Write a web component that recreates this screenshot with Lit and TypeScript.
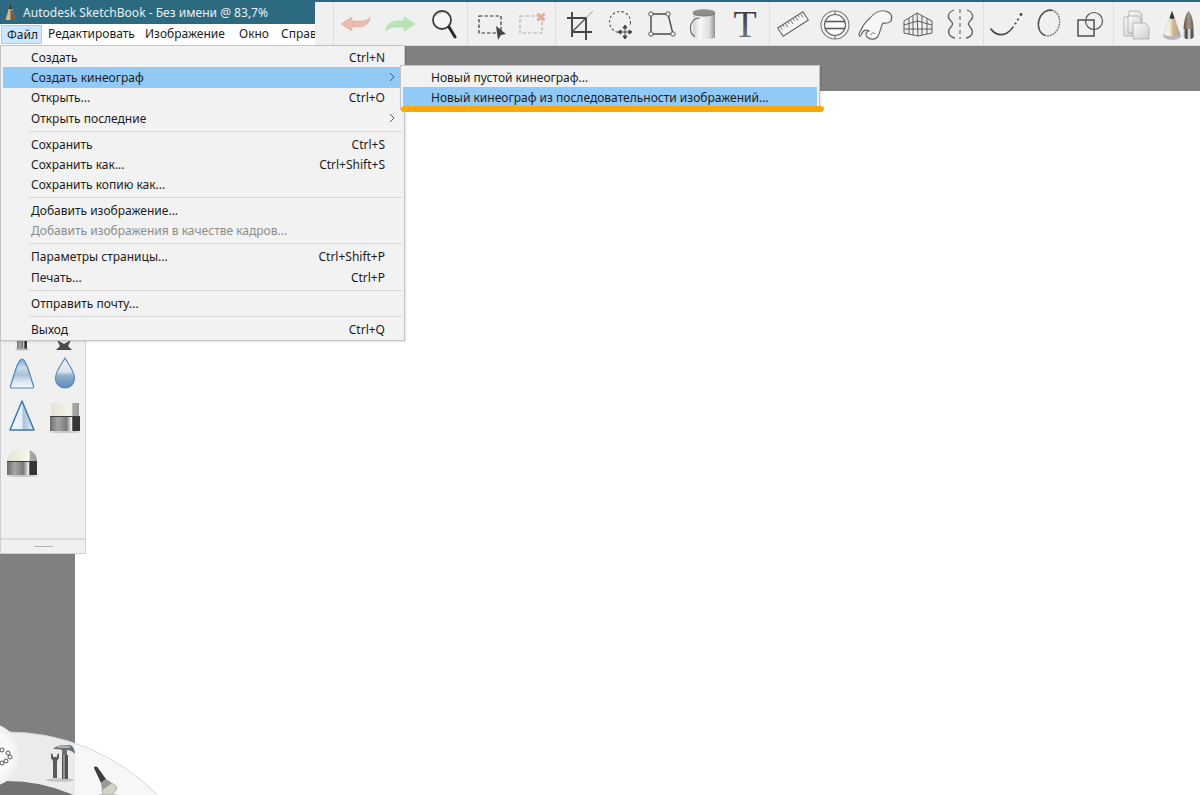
import { LitElement, html, css, svg } from "lit";
import { customElement } from "lit/decorators.js";

const defs = svg`
  <linearGradient id="metal" x1="0" x2="1" y1="0" y2="0">
    <stop offset="0" stop-color="#6b6b6b"/><stop offset=".25" stop-color="#a6a6a6"/><stop offset=".55" stop-color="#7b7b7b"/>
    <stop offset=".72" stop-color="#f2f2f2"/><stop offset=".76" stop-color="#33363a"/><stop offset="1" stop-color="#33363a"/>
  </linearGradient>
  <linearGradient id="cream" x1="0" x2="1" y1="0" y2="0">
    <stop offset="0" stop-color="#e6e2d6"/><stop offset=".7" stop-color="#f7f4ea"/><stop offset=".72" stop-color="#fff"/><stop offset=".78" stop-color="#aaa"/><stop offset="1" stop-color="#999"/>
  </linearGradient>
  <linearGradient id="blueV" x1="0" x2="0" y1="0" y2="1">
    <stop offset="0" stop-color="#7fa5cc"/><stop offset=".3" stop-color="#cbdbe9"/><stop offset=".55" stop-color="#a9c1d9"/><stop offset=".8" stop-color="#dfe9f2"/><stop offset="1" stop-color="#f4f7fa"/>
  </linearGradient>
  <linearGradient id="drop" x1="0" x2="0" y1="0" y2="1">
    <stop offset="0" stop-color="#f2f5f8"/><stop offset=".45" stop-color="#dbe4ec"/><stop offset=".6" stop-color="#8fadcc"/><stop offset="1" stop-color="#5f8ab8"/>
  </linearGradient>
  <linearGradient id="blueH" x1="0" x2="1" y1="0" y2="0">
    <stop offset="0" stop-color="#f4f8fb"/><stop offset=".5" stop-color="#e5eef6"/><stop offset=".55" stop-color="#a6c4de"/><stop offset="1" stop-color="#e3edf5"/>
  </linearGradient>
  <linearGradient id="can" x1="0" x2="1" y1="0" y2="0">
    <stop offset="0" stop-color="#cfcfcf"/><stop offset=".3" stop-color="#fafafa"/><stop offset=".75" stop-color="#dcdcdc"/><stop offset="1" stop-color="#8f8f8f"/>
  </linearGradient>
  <linearGradient id="tee" x1="0" x2="0" y1="0" y2="1">
    <stop offset="0" stop-color="#2f2f2f"/><stop offset=".55" stop-color="#555"/><stop offset="1" stop-color="#8a8a8a"/>
  </linearGradient>
  <linearGradient id="page" x1="0" x2="1" y1="0" y2="1">
    <stop offset="0" stop-color="#fbfbfb"/><stop offset="1" stop-color="#cdcdcd"/>
  </linearGradient>
  <linearGradient id="wood" x1="0" x2="1" y1="0" y2="0">
    <stop offset="0" stop-color="#f7f7f5"/><stop offset=".4" stop-color="#eee9df"/><stop offset=".55" stop-color="#d5b48d"/><stop offset="1" stop-color="#a9a49b"/>
  </linearGradient>
  <linearGradient id="brown" x1="0" x2="1" y1="0" y2="0">
    <stop offset="0" stop-color="#5e5043"/><stop offset=".5" stop-color="#a39686"/><stop offset="1" stop-color="#6d5f50"/>
  </linearGradient>
  <linearGradient id="steel" x1="0" x2="1" y1="0" y2="0">
    <stop offset="0" stop-color="#e8e8e8"/><stop offset=".5" stop-color="#bcbcbc"/><stop offset="1" stop-color="#8c8c8c"/>
  </linearGradient>
  <linearGradient id="ferrule" x1="0" x2="1" y1="0" y2="0">
    <stop offset="0" stop-color="#f4f4f4"/><stop offset=".3" stop-color="#333"/><stop offset=".55" stop-color="#f4f4f4"/><stop offset=".8" stop-color="#444"/><stop offset="1" stop-color="#888"/>
  </linearGradient>
  <radialGradient id="disc">
    <stop offset="0" stop-color="#ffffff"/><stop offset=".75" stop-color="#f8f8f8"/><stop offset="1" stop-color="#ededed"/>
  </radialGradient>
  <linearGradient id="hole" x1="0" x2="0" y1="0" y2="1">
    <stop offset="0" stop-color="#727272"/><stop offset="1" stop-color="#808080"/>
  </linearGradient>
`;

const tb = (body: unknown) => html`<div class="btn"><svg viewBox="0 0 40 40" width="40" height="40">${body}</svg></div>`;

const toolGroups = [
  [
    tb(svg`<path d="M5 20 16 13V17H24C29 17 32 16 34 13 34 20 28 23 22 23H16V27Z" fill="#eabcae" stroke="#e0aa9a" stroke-width=".6"/>`),
    tb(svg`<path d="M5 20 16 13V17H24C29 17 32 16 34 13 34 20 28 23 22 23H16V27Z" transform="rotate(180 20 20)" fill="#b9e6b4" stroke="#a5d8a0" stroke-width=".6"/>`),
    tb(svg`<circle cx="17" cy="16" r="9" fill="#f6f6f6" stroke="#3c3c3c" stroke-width="1.8"/><path d="M11 12a8 8 0 0 1 6-3" fill="none" stroke="#c7c7c7"/><path d="M24 23 30 33" stroke="#2a2a2a" stroke-width="3" stroke-linecap="round"/>`),
  ],
  [
    tb(svg`<rect x="9" y="12" width="22" height="17" fill="none" stroke="#333" stroke-width="1.2" stroke-dasharray="3.5 2"/><path d="M26 22 36 30 31 31 28 36Z" fill="#444"/>`),
    tb(svg`<rect x="7" y="12" width="22" height="17" fill="none" stroke="#b0b0b0" stroke-width="1.2" stroke-dasharray="3.5 2"/><path d="M25.5 9 28 11.5 30.5 9 32 10.5 29.5 13 32 15.5 30.5 17 28 14.5 25.5 17 24 15.5 26.5 13 24 10.5Z" fill="#e4a99b" stroke="#e4a99b"/>`),
  ],
  [
    tb(svg`<path d="M15 8V33M10 14H30M29 14V36M15 28H35" fill="none" stroke="#444" stroke-width="1.9"/><path d="M15 28 29 14" stroke="#555" stroke-width="1.4"/><path d="M29 14 36 7" stroke="#888" stroke-width=".8"/>`),
    tb(svg`<circle cx="20" cy="18" r="10.5" fill="none" stroke="#555" stroke-width="1.1" stroke-dasharray="2.6 2"/><rect x="18" y="21" width="14" height="13" fill="#f0f0f0"/><path d="M25 22V34M19 28H31M25 21 23 24H27ZM25 35 23 32H27ZM18 28 21 26V30ZM32 28 29 26V30Z" fill="#444" stroke="#444" stroke-width="1"/>`),
    tb(svg`<path d="M9 10H26L31 30H9Z" fill="none" stroke="#4a4a4a" stroke-width="1.4"/><g fill="#f5f5f5" stroke="#555" stroke-width="1"><circle cx="9" cy="10" r="2.2"/><circle cx="26" cy="10" r="2.2"/><circle cx="31" cy="30" r="2.2"/><circle cx="9" cy="30" r="2.2"/></g>`),
    tb(svg`<path d="M8 9V33C8 36 30 36 30 33V9Z" fill="url(#can)"/><ellipse cx="19" cy="9" rx="11" ry="3" fill="#8d8d8d" stroke="#777"/><path d="M8 8C10 5 28 5 30 8" fill="none" stroke="#aaa"/><path d="M15 14C8 14 4 20 6 28 7 31 8 32 10 32" fill="none" stroke="#666" stroke-width="1.2"/>`),
    html`<div class="btn"><svg viewBox="0 0 40 40" width="40" height="40"><text x="17" y="33" text-anchor="middle" class="tee" fill="url(#tee)">T</text></svg></div>`,
  ],
  [
    tb(svg`<g transform="rotate(-33 22 20)"><rect x="7" y="15" width="30" height="10" fill="#f6f6f6" stroke="#666" stroke-width="1.1"/><path d="M10 15V19M13 15V18M16 15V20M19 15V18M22 15V20M25 15V18M28 15V20M31 15V18M34 15V20" stroke="#777" stroke-width=".9"/></g>`),
    tb(svg`<circle cx="21" cy="21" r="14" fill="#f4f4f4" stroke="#7a7a7a" stroke-width="1.1"/><circle cx="21" cy="21" r="10.5" fill="#fafafa" stroke="#666" stroke-width="1.2"/><path d="M11 17.500H31M11 24.500H31" stroke="#555" stroke-width="1.3"/><path d="M21 7V10M21 32V35" stroke="#777" stroke-width="1.2"/>`),
    tb(svg`<path d="M3 30C6 23 10 17 14 14 18 9 24 6 29 7 35 8 37 12 35 17 33 20 30 19 27 19 25 21 25 27 22 32 20 36 14 36 11 33 9 30 10 28 13 27 10 25 7 26 5 31 4 33 3 32 3 30Z" fill="#f6f6f6" stroke="#666" stroke-width="1.2"/><path d="M15 31C15 29 18 28 19 30" fill="none" stroke="#777"/>`),
    tb(svg`<g fill="none" stroke="#5c5c5c" stroke-width="1"><path d="M5 17 18 9 33 17V29L19 32 5 29ZM18 9 19 32M10 14V30.200M14 11.500V31M23 11.500V31M28 14.500V30M5 21 18.500 17 33 21M5 25 19 25 33 25"/></g>`),
    tb(svg`<path d="M18 5V35" stroke="#777" stroke-width="1.3" stroke-dasharray="4 3"/><path d="M12 6C6 8 5 13 8 16 11 19 12 20 8 24 5 28 7 33 13 34M25 6C31 8 32 13 29 16 26 19 25 20 29 24 32 28 30 33 24 34" fill="none" stroke="#666" stroke-width="1.3"/>`),
  ],
  [
    tb(svg`<path d="M5 25C9 31 16 32 21 29 24 27 26 25 27 23" fill="none" stroke="#444" stroke-width="1.6" stroke-linecap="round"/><circle cx="29.5" cy="19.5" r="1.1" fill="#444"/><circle cx="32" cy="15.5" r="1.1" fill="#444"/><circle cx="35" cy="10.5" r="1.4" fill="#444"/>`),
    tb(svg`<g transform="rotate(15 20 19)"><ellipse cx="20" cy="19" rx="10.5" ry="13" fill="none" stroke="#c0c0c0" stroke-width="1.2"/><path d="M20 6A10.5 13 0 0 0 20 32" fill="none" stroke="#555" stroke-width="1.5"/><path d="M20 6A10.5 13 0 0 1 20 32" fill="none" stroke="#777" stroke-width="1.4" stroke-dasharray="1.4 1.4"/></g>`),
    tb(svg`<rect x="6" y="16" width="16" height="16" fill="none" stroke="#444" stroke-width="1.4"/><circle cx="22" cy="17" r="8.5" fill="none" stroke="#555" stroke-width="1.2"/>`),
  ],
  [
    tb(svg`<g stroke="#a8a8a8" stroke-width=".8" fill="url(#page)"><path d="M13 7H23L26 10V24H13Z"/><path d="M8 13H17L20 16V32H8Z"/><path d="M12 12H22L25 15V29H12Z"/><path d="M17 19H29L33 23V35H17Z"/></g>`),
    tb(svg`<path d="M4 32 13 7 22 32C19 37 7 37 4 32Z" fill="url(#wood)" stroke="#c4c4c4" stroke-width=".5"/><path d="M10.500 14 13 7 15.500 14C14 15.300 12 15.300 10.500 14Z" fill="#37332f"/><path d="M4 32C7 37 19 37 22 32L21.400 30C18 33 8 33 4.600 30Z" fill="#b9b9b9"/><path d="M24.500 25C25 16 27 9 29.500 7 32 9 34.500 16 34.500 25Z" fill="url(#brown)"/><path d="M24.500 25H34.500L35 33C32 36 27 36 24 33Z" fill="url(#ferrule)"/>`),
  ],
];

type Row = { t?: string; k?: string; sub?: boolean; on?: boolean; off?: boolean; sep?: boolean };
const fileMenu: Row[] = [
  { t: "Создать", k: "Ctrl+N" },
  { t: "Создать кинеограф", sub: true, on: true },
  { t: "Открыть...", k: "Ctrl+O" },
  { t: "Открыть последние", sub: true },
  { sep: true },
  { t: "Сохранить", k: "Ctrl+S" },
  { t: "Сохранить как...", k: "Ctrl+Shift+S" },
  { t: "Сохранить копию как..." },
  { sep: true },
  { t: "Добавить изображение..." },
  { t: "Добавить изображения в качестве кадров...", off: true },
  { sep: true },
  { t: "Параметры страницы...", k: "Ctrl+Shift+P" },
  { t: "Печать...", k: "Ctrl+P" },
  { sep: true },
  { t: "Отправить почту..." },
  { sep: true },
  { t: "Выход", k: "Ctrl+Q" },
];
const subMenu: Row[] = [
  { t: "Новый пустой кинеограф..." },
  { t: "Новый кинеограф из последовательности изображений...", on: true },
];

const chevron = html`<svg class="chev" viewBox="0 0 6 10" width="6" height="10"><path d="M1 1 5 5 1 9" fill="none" stroke="#555" stroke-width="1"/></svg>`;

const renderRow = (r: Row) =>
  r.sep
    ? html`<div class="sep"></div>`
    : html`<div class="row ${r.on ? "on" : ""} ${r.off ? "off" : ""}">
        <span>${r.t}</span>
        ${r.k ? html`<span class="key">${r.k}</span>` : ""}${r.sub ? chevron : ""}
      </div>`;

const panelIcons = [
  svg`<rect x="16" y="31" width="10" height="9" fill="url(#metal)"/><ellipse cx="21" cy="40.500" rx="7" ry="1" fill="#bdbdbd"/>`,
  svg`<path d="M13 31 20 35 27 31 24 37 28 41H12L16 37Z" fill="#4a4a4a"/>`,
  svg`<path d="M9.500 33C13 22 17 6 21 6 25 6 29 22 32.500 33 33 34.500 32 35 31 35H11C10 35 9 34.500 9.500 33Z" fill="url(#blueV)" stroke="#4f85bb" stroke-width="1.2"/>`,
  svg`<path d="M21 5C18 11 11.500 18 11.500 25 11.500 31 16 35 21 35 26 35 30.500 31 30.500 25 30.500 18 24 11 21 5Z" fill="url(#drop)" stroke="#5f8cbc" stroke-width="1.2"/>`,
  svg`<path d="M21 4 9 33H33Z" fill="url(#blueH)" stroke="#3b78b4" stroke-width="1.5" stroke-linejoin="round"/>`,
  svg`<rect x="6" y="19" width="30" height="15" fill="url(#metal)"/><rect x="6" y="19" width="30" height="1" fill="#3d3d3d"/><rect x="7" y="6" width="28" height="13" fill="url(#cream)"/><ellipse cx="21" cy="35" rx="15" ry="1" fill="#c8c8c8"/>`,
  svg`<path d="M6 20C6 12 12 8 21 8 30 8 36 12 36 20Z" fill="url(#cream)"/><rect x="6" y="20" width="30" height="14" fill="url(#metal)"/><rect x="6" y="20" width="30" height="1" fill="#3d3d3d"/><ellipse cx="21" cy="35" rx="15" ry="1" fill="#c8c8c8"/>`,
];

@customElement("app-root")
export class AppRoot extends LitElement {
  static styles = css`
    :host {
      display: flex;
      flex-direction: column;
      width: 1200px;
      height: 795px;
      position: relative;
      overflow: hidden;
      background: #808080;
      font-family: "Noto Sans", "Open Sans", sans-serif;
      font-size: 12px;
      color: #1c1c1c;
    }
    .defs { position: absolute; width: 0; height: 0; }
    .top { display: flex; height: 46px; flex: none; }
    .left { width: 315px; flex: none; overflow: hidden; }
    .title {
      height: 24px;
      background: #2b6a80;
      color: #e8f0f3;
      display: flex;
      align-items: center;
      gap: 7px;
      padding-left: 5px;
      font-size: 12.05px;
      white-space: nowrap;
    }
    .menubar {
      height: 22px;
      background: #fff;
      display: flex;
      align-items: flex-start;
      white-space: nowrap;
      padding: 1px 0 0 1px;
    }
    .mi { height: 19px; line-height: 18px; padding-left: 6px; box-sizing: border-box; flex: none; }
    .mi.active { background: #cce8ff; border: 1px solid #99d1ff; line-height: 17px; padding-left: 5px; width: 41px; }
    .m1 { width: 97px; } .m2 { width: 94px; } .m3 { width: 42px; }
    .toolbar {
      flex: 1;
      display: flex;
      background: #f0f0f0;
      border-top: 2px solid #2b6a80;
      border-bottom: 1px solid #dcdcdc;
      padding-left: 18px;
      box-sizing: border-box;
    }
    .group { display: flex; border-left: 1px solid #dedede; box-sizing: border-box; }
    .g0 { width: 134px; } .g1 { width: 88px; } .g2 { width: 214px; }
    .g3 { width: 214px; } .g4 { width: 130px; } .g5 { flex: 1; }
    .btn { flex: 1 1 0; display: flex; align-items: center; justify-content: center; min-width: 0; }
    .tee { font-family: "Liberation Serif", serif; font-size: 38px; font-weight: 400; }
    .work { flex: 1; padding: 45px 0 0 75px; display: flex; }
    .canvas { flex: 1; background: #fff; }

    .menu {
      position: absolute;
      background: #f2f2f2;
      border: 1px solid #c4c4c4;
      box-shadow: 1px 1px 2px rgba(0, 0, 0, 0.12);
      box-sizing: border-box;
      white-space: nowrap;
    }
    .file { left: 0; top: 45px; width: 405px; padding: 1px 4px 1px 2px; }
    .submenu { left: 400px; top: 65px; width: 420px; padding: 1px 2px; }
    .row {
      height: 20.3px;
      display: flex;
      align-items: center;
      justify-content: space-between;
      padding: 0 15px 0 28px;
      position: relative;
    }
    .row.on { background: #91c9f7; }
    .row.off { color: #8c8c8c; }
    .chev { position: absolute; right: 5px; top: 5px; }
    .sep { height: 5.7px; display: flex; align-items: center; margin-left: 26px; margin-right: -2px; }
    .sep::before { content: ""; flex: 1; height: 1px; background: #d8d8d8; }
    .mark {
      position: absolute;
      left: 401px;
      top: 106px;
      width: 423px;
      height: 6px;
      border-radius: 3px;
      background: #ffa800;
    }

    .panel {
      position: absolute;
      left: 0;
      top: 308px;
      width: 86px;
      height: 246px;
      box-sizing: border-box;
      background: #f0f0f0;
      border: 1px solid #cfcfcf;
      border-top: 0;
      display: flex;
      flex-direction: column;
    }
    .tools { flex: 1; display: grid; grid-template-columns: 43px 43px; grid-auto-rows: 44px; align-content: start; margin-left: -1px; }
    .tool { display: flex; align-items: center; justify-content: center; }
    .grip { height: 13px; border-top: 2px solid #dcdcdc; display: flex; align-items: center; justify-content: center; }
    .grip::before { content: ""; width: 19px; height: 1px; background: #b4b4b4; }

    .wheel { position: absolute; left: 0; bottom: 0; }
  `;

  render() {
    return html`
      <svg class="defs" aria-hidden="true">${defs}</svg>
      <div class="top">
        <div class="left">
          <div class="title">
            <svg viewBox="0 0 11 18" width="11" height="18">
              <path d="M.5 17 5.500 0 10.500 17Z" fill="#d8b98c"/>
              <path d="M3.800 6 5.500 0 7.200 6Z" fill="#3a2c22"/>
              <path d="M5.500 6V17H10.500L8 8Z" fill="#7a5a3a"/>
            </svg>
            <span>Autodesk SketchBook - Без имени @ 83,7%</span>
          </div>
          <div class="menubar">
            <div class="mi active">Файл</div>
            <div class="mi m1">Редактировать</div>
            <div class="mi m2">Изображение</div>
            <div class="mi m3">Окно</div>
            <div class="mi">Справка</div>
          </div>
        </div>
        <div class="toolbar">
          ${toolGroups.map((g, i) => html`<div class="group g${i}">${g}</div>`)}
        </div>
      </div>
      <div class="work"><div class="canvas"></div></div>

      <div class="panel">
        <div class="tools">
          ${panelIcons.map((p) => html`<div class="tool"><svg viewBox="0 0 42 42" width="42" height="42">${p}</svg></div>`)}
        </div>
        <div class="grip"></div>
      </div>

      <svg class="wheel" viewBox="0 0 200 70" width="200" height="70">
        <g transform="translate(0 -725)">
          <circle cx="7" cy="943" r="211" fill="#f6f6f6" fill-opacity=".9" stroke="#d8d8d8"/>
          <circle cx="7" cy="943" r="162" fill="url(#hole)"/>
          <circle cx="-12" cy="755" r="32" fill="url(#disc)"/>
          <g fill="none" stroke="#555" stroke-width="1">
            <circle cx="2" cy="750" r="2"/><circle cx="8" cy="753" r="2"/><circle cx="10" cy="757" r="2"/><circle cx="6" cy="761" r="2"/><circle cx="2" cy="763" r="2"/>
          </g>
          <ellipse cx="60" cy="780" rx="14" ry="1.800" fill="#c4c4c4"/>
          <path d="M51 753 51 758 53 761V778H57V761L59 758 59 753 57 755 57 757 53 757 53 755Z" fill="#5b5b5b"/>
          <path d="M62 755H68V779H62Z" fill="#4c5356"/>
          <path d="M63 755H65V779H63Z" fill="#8b9194"/>
          <path d="M53 749C56 746 60 745 64 745H70C73 746 75 750 75 754 72 751 70 750 67 750V755H62V750C59 749 56 749 53 749Z" fill="#6a7073"/>
          <path d="M56 747C59 745 64 745 70 746L70 748H60Z" fill="#a9aeb1"/>
          <path d="M94 768C94 766 97 766 98 768L106 779 101 783Z" fill="#3e3e3e"/>
          <path d="M101 783 106 779 112 783 102 790Z" fill="#9a9a9a"/>
          <path d="M102 790 112 783 117 787C116 792 112 795 108 796H103Z" fill="#d8d2c6" stroke="#8a8a8a" stroke-width=".6"/>
          <ellipse cx="108" cy="795" rx="10" ry="1" fill="#bbb"/>
        </g>
      </svg>

      <div class="menu file">${fileMenu.map(renderRow)}</div>
      <div class="menu submenu">${subMenu.map(renderRow)}</div>
      <div class="mark"></div>
    `;
  }
}
